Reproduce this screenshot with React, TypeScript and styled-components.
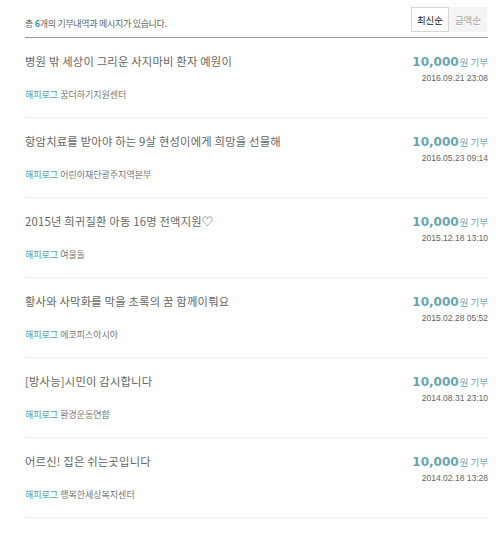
import styled, { createGlobalStyle } from "styled-components";

interface Donation {
  title: string;
  org: string;
  amount: string;
  date: string;
}

const donations: Donation[] = [
  { title: "병원 밖 세상이 그리운 사지마비 환자 예원이", org: "꿈더하기지원센터", amount: "10,000", date: "2016.09.21 23:08" },
  { title: "항암치료를 받아야 하는 9살 현성이에게 희망을 선물해", org: "어린이재단광주지역본부", amount: "10,000", date: "2016.05.23 09:14" },
  { title: "2015년 희귀질환 아동 16명 전액지원♡", org: "여울돌", amount: "10,000", date: "2015.12.18 13:10" },
  { title: "황사와 사막화를 막을 초록의 꿈 함께이뤄요", org: "에코피스아시아", amount: "10,000", date: "2015.02.28 05:52" },
  { title: "[방사능]시민이 감시합니다", org: "환경운동연합", amount: "10,000", date: "2014.08.31 23:10" },
  { title: "어르신! 집은 쉬는곳입니다", org: "행복한세상복지센터", amount: "10,000", date: "2014.02.18 13:28" },
];

const App = () => {
  return (
    <>
      <GlobalStyle />
      <Wrap>
        <Header>
          <Summary>
            총 <Count>{donations.length}</Count>개의 기부내역과 메시지가 있습니다.
          </Summary>
          <Tabs>
            <Tab active>최신순</Tab>
            <Tab>금액순</Tab>
          </Tabs>
        </Header>
        <List>
          {donations.map((d) => (
            <Row key={d.date}>
              <Title>{d.title}</Title>
              <Amount>
                <Num>{d.amount}</Num>원 기부
              </Amount>
              <Date>{d.date}</Date>
              <Org>
                <Brand>해피로그</Brand> {d.org}
              </Org>
            </Row>
          ))}
        </List>
      </Wrap>
    </>
  );
};

export default App;

const GlobalStyle = createGlobalStyle`
  body {
    margin: 0;
    background: #ffffff;
    font-family: "Noto Sans CJK KR", "Noto Sans", sans-serif;
  }
`;

const Wrap = styled.div`
  width: 463px;
  margin-left: 25px;
  padding-top: 7px;
`;

const Header = styled.div`
  display: flex;
  justify-content: space-between;
  align-items: center;
  height: 30px;
  border-bottom: 1px solid #9a9a9a;
`;

const Summary = styled.div`
  font-size: 9px;
  color: #666;
  letter-spacing: -0.3px;
  padding-top: 3px;
`;

const Count = styled.span`
  color: #3c9aa8;
  font-weight: bold;
`;

const Tabs = styled.div`
  display: flex;
  align-self: flex-start;
  margin-right: 1px;
`;

const Tab = styled.div<{ active?: boolean }>`
  width: 38px;
  height: 25px;
  box-sizing: border-box;
  display: flex;
  align-items: center;
  justify-content: center;
  font-size: 9.5px;
  color: ${(p) => (p.active ? "#222" : "#aaa")};
  background: ${(p) => (p.active ? "#fff" : "#f4f4f4")};
  border: 1px solid ${(p) => (p.active ? "#d6d6d6" : "#f4f4f4")};
`;

const List = styled.div`
  display: flex;
  flex-direction: column;
`;

const Row = styled.div`
  display: grid;
  grid-template-columns: 1fr auto;
  grid-template-rows: 16px 16px 18px;
  align-items: center;
  height: 80px;
  box-sizing: border-box;
  padding-top: 15px;
  border-bottom: 1px solid #efefef;
`;

const Title = styled.div`
  font-size: 11.3px;
  color: #666;
  letter-spacing: 0.2px;
`;

const Amount = styled.div`
  justify-self: end;
  font-size: 9.5px;
  color: #66a5b2;
  padding-top: 1px;
`;

const Num = styled.span`
  font-family: "DejaVu Sans", sans-serif;
  font-size: 12px;
  font-weight: bold;
  margin-right: 1px;
`;

const Date = styled.div`
  grid-column: 2;
  justify-self: end;
  font-family: "Liberation Sans", sans-serif;
  font-size: 8.5px;
  color: #666;
  padding-top: 2px;
`;

const Org = styled.div`
  grid-column: 1 / span 2;
  font-size: 9px;
  color: #777;
`;

const Brand = styled.span`
  color: #4a9fae;
`;
